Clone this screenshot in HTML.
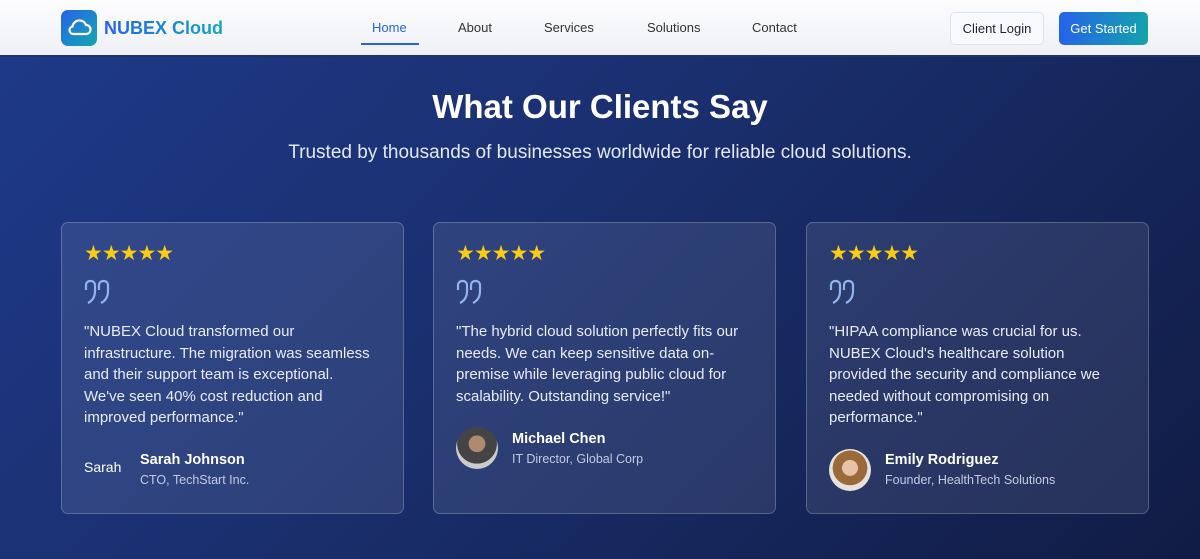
<!DOCTYPE html>
<html><head><style>
*{margin:0;padding:0;box-sizing:border-box}
body{width:1200px;height:559px;overflow:hidden;font-family:"Liberation Sans",sans-serif;background:linear-gradient(135deg,#1e3a8a 0%,#1a2f6e 45%,#111c45 100%);position:relative}
.nav{position:absolute;top:0;left:0;width:1200px;height:57px;background:linear-gradient(#fdfdfe,#eef0f5);border-bottom:2px solid #1e3272}
.logo{position:absolute;left:61px;top:10px;width:36px;height:36px;border-radius:7px;background:linear-gradient(135deg,#2563eb,#14a8b0)}
.brand{position:absolute;left:104px;top:18px;font-size:18px;font-weight:bold;background:linear-gradient(90deg,#2563eb,#14a8b8);-webkit-background-clip:text;color:transparent}
.nl{position:absolute;top:20px;font-size:13px;color:#333}
.btn1{position:absolute;left:950px;top:12px;width:94px;height:33px;border:1px solid #dde3ec;border-radius:5px;background:#f7f9fc;font-size:13px;color:#1e2235;text-align:center;line-height:31px}
.btn2{position:absolute;left:1059px;top:12px;width:89px;height:33px;border-radius:5px;background:linear-gradient(90deg,#2563eb,#14a3ab);font-size:13px;color:#fff;text-align:center;line-height:33px}
h1{position:absolute;top:88px;width:1200px;text-align:center;color:#fff;font-size:33px;font-weight:bold}
.sub{position:absolute;top:142px;width:1200px;text-align:center;color:#e3e8f5;font-size:19px}
.card{position:absolute;top:222px;width:343px;height:292px;border:1px solid rgba(255,255,255,.22);border-radius:7px;background:rgba(255,255,255,.09);padding:20px 22px}
.stars{color:#facc15;font-size:21px;letter-spacing:-1px;height:22px;line-height:22px}
.q{margin-top:14px;height:30px}
.txt{margin-top:12px;color:#e8ecf6;font-size:15px;line-height:21.6px;white-space:nowrap}
.who{display:flex;align-items:center;margin-top:20px}
.av{width:42px;height:42px;border-radius:50%;margin-right:14px;flex:none}
.nm{color:#fff;font-size:14.5px;font-weight:bold}
.rl{color:#c3cbe0;font-size:12.5px;margin-top:5px}
</style></head><body>
<div class="nav">
<div class="logo"><svg width="36" height="36" viewBox="0 0 36 36"><path d="M12 24h13a4.5 4.5 0 0 0 0-9 7 7 0 0 0-13.5 1.5A3.8 3.8 0 0 0 12 24z" fill="none" stroke="#fff" stroke-width="2.2"/></svg></div>
<div class="brand">NUBEX Cloud</div>
<div class="nl" style="left:372px;color:#2563eb">Home</div>
<div style="position:absolute;left:361px;top:43px;width:58px;height:2px;background:#2563eb"></div>
<div class="nl" style="left:458px">About</div>
<div class="nl" style="left:544px">Services</div>
<div class="nl" style="left:647px">Solutions</div>
<div class="nl" style="left:752px">Contact</div>
<div class="btn1">Client Login</div>
<div class="btn2">Get Started</div>
</div>
<h1>What Our Clients Say</h1>
<div class="sub">Trusted by thousands of businesses worldwide for reliable cloud solutions.</div>

<div class="card" style="left:61px">
<div class="stars">★★★★★</div>
<div class="q"><svg width="28" height="26" viewBox="0 0 28 26"><path d="M2 11V6a4 4 0 0 1 4-4h1a4 4 0 0 1 4 4v6c0 6-3 10-7 12M15 11V6a4 4 0 0 1 4-4h1a4 4 0 0 1 4 4v6c0 6-3 10-7 12" fill="none" stroke="#8fb4ee" stroke-width="2.2"/></svg></div>
<div class="txt">"NUBEX Cloud transformed our<br>infrastructure. The migration was seamless<br>and their support team is exceptional.<br>We've seen 40% cost reduction and<br>improved performance."</div>
<div class="who"><div class="av" style="color:#fff;font-size:14px;border-radius:0;padding-top:10px;margin-right:14px">Sarah</div><div><div class="nm">Sarah Johnson</div><div class="rl">CTO, TechStart Inc.</div></div></div>
</div>

<div class="card" style="left:433px">
<div class="stars">★★★★★</div>
<div class="q"><svg width="28" height="26" viewBox="0 0 28 26"><path d="M2 11V6a4 4 0 0 1 4-4h1a4 4 0 0 1 4 4v6c0 6-3 10-7 12M15 11V6a4 4 0 0 1 4-4h1a4 4 0 0 1 4 4v6c0 6-3 10-7 12" fill="none" stroke="#8fb4ee" stroke-width="2.2"/></svg></div>
<div class="txt">"The hybrid cloud solution perfectly fits our<br>needs. We can keep sensitive data on-<br>premise while leveraging public cloud for<br>scalability. Outstanding service!"</div>
<div class="who"><div class="av" style="background:radial-gradient(circle at 50% 40%,#b08a70 0 25%,#444 26% 60%,#ccc 61%)"></div><div><div class="nm">Michael Chen</div><div class="rl">IT Director, Global Corp</div></div></div>
</div>

<div class="card" style="left:806px">
<div class="stars">★★★★★</div>
<div class="q"><svg width="28" height="26" viewBox="0 0 28 26"><path d="M2 11V6a4 4 0 0 1 4-4h1a4 4 0 0 1 4 4v6c0 6-3 10-7 12M15 11V6a4 4 0 0 1 4-4h1a4 4 0 0 1 4 4v6c0 6-3 10-7 12" fill="none" stroke="#8fb4ee" stroke-width="2.2"/></svg></div>
<div class="txt">"HIPAA compliance was crucial for us.<br>NUBEX Cloud's healthcare solution<br>provided the security and compliance we<br>needed without compromising on<br>performance."</div>
<div class="who"><div class="av" style="background:radial-gradient(circle at 50% 45%,#e8c2a8 0 25%,#9a6a3a 26% 55%,#e6e2dc 56%)"></div><div><div class="nm">Emily Rodriguez</div><div class="rl">Founder, HealthTech Solutions</div></div></div>
</div>
</body></html>
